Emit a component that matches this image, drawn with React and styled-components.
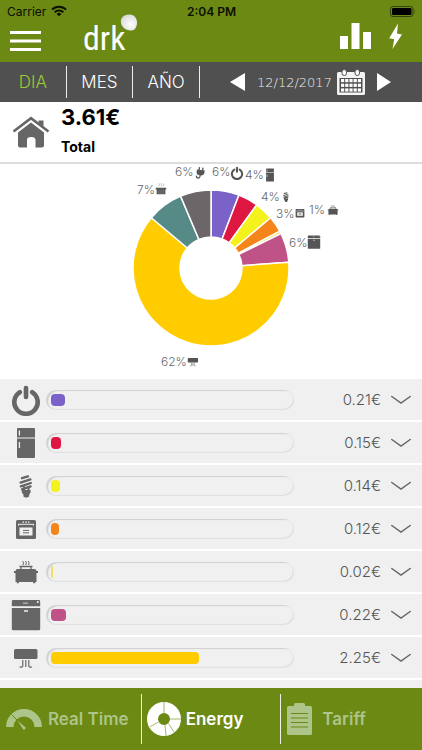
import React from "react";
import styled, { createGlobalStyle } from "styled-components";

const total = 3.61;

// label: where the percentage starts, icon: centre of the small icon
const appliances = [
  { id: "power", name: "Standby", value: 0.21, share: "6%", color: "#7b62c9", label: [212, 12], icon: [237, 9] },
  { id: "fridge", name: "Fridge", value: 0.15, share: "4%", color: "#de1642", label: [245, 15], icon: [270, 11] },
  { id: "bulb", name: "Lighting", value: 0.14, share: "4%", color: "#f5f11c", label: [261, 37], icon: [286, 33] },
  { id: "oven", name: "Oven", value: 0.12, share: "3%", color: "#f5841b", label: [276, 54], icon: [300, 49] },
  { id: "toaster", name: "Toaster", value: 0.02, share: "1%", color: "#f3dd62", label: [309, 50], icon: [333, 46] },
  { id: "dishwasher", name: "Dishwasher", value: 0.22, share: "6%", color: "#bf5286", label: [289, 83], icon: [314, 78] },
  { id: "aircon", name: "Air conditioning", value: 2.25, share: "62%", color: "#ffcc00", label: [161, 202], icon: [193, 198] },
  { id: "cooking", name: "Cooking", value: 0.27, share: "7%", color: "#568a86", label: [137, 30], icon: [161, 25] },
  { id: "plug", name: "Others", value: 0.23, share: "6%", color: "#6d6668", label: [175, 12], icon: [200, 9] },
];

const listed = appliances.slice(0, 7);

const shapes = {
  power: (
    <g fill="none" stroke="currentColor" strokeWidth="4.6" strokeLinecap="round">
      <path d="M9.8 8.2a11.7 11.7 0 1 0 12.4 0" />
      <path d="M16 4v9" />
    </g>
  ),
  fridge: (
    <g fill="currentColor">
      <path d="M8 1h16a1 1 0 0 1 1 1v8.500H7V2a1 1 0 0 1 1-1z" />
      <path d="M7 11.600h18V30a1 1 0 0 1-1 1H8a1 1 0 0 1-1-1z" />
      <path d="M9.400 3.500v5M9.400 15v6" stroke="#f0f0f0" strokeWidth="1.300" />
    </g>
  ),
  bulb: (
    <g fill="none" stroke="currentColor" strokeLinecap="round">
      <path d="M12 8.200l6-1.800M10.600 12.600l9.800-3.200M10.800 16.400l10-3.400M12 19.400l8.600-3" strokeWidth="2.300" />
      <path d="M14 17v4M18.600 17.500V21" strokeWidth="2" />
      <path d="M11.800 20h8.800v2.400l-1.400 2.200v1.800l-2 1.200h-2l-1.800-1.200v-1.800l-1.600-2.200z" fill="currentColor" stroke="none" />
    </g>
  ),
  oven: (
    <g>
      <rect x="6" y="7" width="20" height="19" rx="1.500" fill="currentColor" />
      <path d="M8.500 11.300h15M8.500 11v1.500M23.500 11v1.500" stroke="#f0f0f0" strokeWidth="1" />
      <path d="M12.500 9.200h1.500M15.200 9.200h1.600M18 9.200h1.500" stroke="#f0f0f0" strokeWidth="1.200" />
      <rect x="9.500" y="14.500" width="13" height="8" fill="#f0f0f0" />
      <path d="M13 17.400h6M13 19.800h6" stroke="currentColor" strokeWidth="1" />
    </g>
  ),
  toaster: (
    <g fill="currentColor">
      <path d="M7.500 13h17q2 0 2 3v10h-1.300v1.300h-2V26H8.800v1.300h-2V26H5.500V16q0-3 2-3z" />
      <path d="M4 15h2v2H4zM26 15h2v2h-2z" />
      <path d="M9.500 10.500h13M11 10.500v3M21 10.500v3" stroke="currentColor" strokeWidth="1.300" />
      <path d="M12.600 5q1.500 1.500.5 4M15.400 5q1.500 1.500.5 4M18.200 5q1.500 1.500.5 4" fill="none" stroke="currentColor" strokeWidth="1" />
    </g>
  ),
  dishwasher: (
    <g fill="currentColor">
      <path d="M3.200 1h25.600a1.400 1.400 0 0 1 1.400 1.400V7.200H1.800V2.400A1.400 1.400 0 0 1 3.200 1z" />
      <path d="M1.800 9h28.400v21a1.200 1.200 0 0 1-1.200 1.200H3A1.200 1.200 0 0 1 1.800 30z" />
      <path d="M13 4.200h5" stroke="#bbb" strokeWidth="1.200" />
      <circle cx="27.800" cy="3" r="1" fill="#f0f0f0" />
      <path d="M14 12h4" stroke="#f0f0f0" strokeWidth="1.500" />
    </g>
  ),
  aircon: (
    <g fill="none" stroke="currentColor" strokeWidth="1.200">
      <rect x="4" y="7" width="23.500" height="10" rx="1.500" fill="currentColor" stroke="none" />
      <path d="M12.800 18v5.500q0 2-3.300 1.500M15.800 18v7M18.800 18v5.500q0 2 3.300 1.500" />
    </g>
  ),
  cooking: (
    <g fill="currentColor">
      <path d="M4 13h24v4h-2v11H6V17H4z" />
      <path d="M10 17v11M14 17v11M18 17v11M22 17v11" stroke="#aaa" strokeWidth=".8" />
      <path d="M11 3q3 3 0 7M16 3q3 3 0 7M21 3q3 3 0 7" fill="none" stroke="#999" strokeWidth="1.300" />
    </g>
  ),
  plug: (
    <g fill="currentColor" transform="rotate(8 16 16)">
      <path d="M8 9h18v5q0 6-6 7h-6q-6-1-6-7z" />
      <path d="M13 3v7M21 3v7M17 20v4q0 4-4 4t-4-5" fill="none" stroke="currentColor" strokeWidth="3" />
    </g>
  ),
};

const ApplianceIcon = ({ id, size, ...rest }) => (
  <svg viewBox="0 0 32 32" width={size} height={size} aria-hidden="true" {...rest}>
    {shapes[id]}
  </svg>
);

const CX = 211;
const CY = 104;
const point = (angle, r) => {
  const a = angle * Math.PI * 2;
  return `${CX + Math.sin(a) * r} ${CY - Math.cos(a) * r}`;
};

const slicePath = (from, to) => {
  const large = to - from > 0.5 ? 1 : 0;
  return `M${point(from, 78)}A78 78 0 ${large} 1 ${point(to, 78)}L${point(to, 31)}A31 31 0 ${large} 0 ${point(from, 31)}Z`;
};

const EnergyChart = () => {
  let sum = 0;
  return (
    <Chart viewBox="0 0 422 215" role="img" aria-label="Consumption by appliance">
      {appliances.map((item) => {
        const from = sum / total;
        sum += item.value;
        return (
          <path key={item.id} d={slicePath(from, sum / total)} fill={item.color} stroke="#fff" strokeWidth="1.500" />
        );
      })}
      {appliances.map((item) => (
        <g key={item.id}>
          <ChartLabel x={item.label[0]} y={item.label[1]}>{item.share}</ChartLabel>
          <ApplianceIcon id={item.id} size={14} x={item.icon[0] - 7} y={item.icon[1] - 7} />
        </g>
      ))}
    </Chart>
  );
};

const App = () => {
  return (
    <Screen>
      <GlobalStyle />
      <Header>
        <StatusBar>
          <Carrier>
            Carrier
            <svg width="16" height="12" viewBox="0 0 16 12" aria-hidden="true">
              <g fill="none" stroke="#0b0f00" strokeWidth="2">
                <path d="M1 4.600a10 10 0 0 1 14 0" />
                <path d="M3.700 7.300a6.200 6.200 0 0 1 8.600 0" />
              </g>
              <path d="M8 11.200L5.600 8.900a3.400 3.400 0 0 1 4.800 0z" fill="#0b0f00" />
            </svg>
          </Carrier>
          <Clock>2:04 PM</Clock>
          <Battery>
            <svg width="26" height="11" viewBox="0 0 26 11" aria-hidden="true">
              <rect x=".5" y=".5" width="22.500" height="10" rx="2.500" fill="none" stroke="#34430a" />
              <rect x="2" y="2" width="19.500" height="7" rx="1.200" fill="#000" />
              <path d="M24 3.700q1.500 1.800 0 3.600z" fill="#34430a" />
            </svg>
          </Battery>
        </StatusBar>
        <NavBar>
          <IconButton aria-label="Menu">
            <svg width="32" height="32" viewBox="0 0 32 32">
              <path d="M0 12.500h31M0 21h31M0 29.500h31" stroke="#fff" strokeWidth="3.200" />
            </svg>
          </IconButton>
          <Logo>
            drk
            <LogoBall width="18" height="18" viewBox="0 0 18 18" aria-hidden="true">
              <defs>
                <radialGradient id="ball" cx=".6" cy=".6" r=".6">
                  <stop offset="0" stopColor="#fff" />
                  <stop offset="1" stopColor="#dcdcdc" />
                </radialGradient>
              </defs>
              <path d="M7 .8Q13-.2 15.500 3.500T16.500 12Q15 17 10 16.500T2.500 12.500Q.3 10 1 6T7 .8z" fill="url(#ball)" />
            </LogoBall>
          </Logo>
          <NavActions>
            <IconButton aria-label="Statistics">
              <svg width="31" height="32" viewBox="0 0 31 32">
                <path d="M0 16h8v13H0zM11.500 3h8v26h-8zM23 12h8v17h-8z" fill="#fff" />
              </svg>
            </IconButton>
            <IconButton aria-label="Power">
              <svg width="14" height="32" viewBox="0 0 14 32">
                <path d="M9 3.500L.2 18.200l5 1L3.500 29 13 14.500l-5-1z" fill="#fff" />
              </svg>
            </IconButton>
          </NavActions>
        </NavBar>
      </Header>

      <PeriodBar>
        <Period $active>DIA</Period>
        <Period>MES</Period>
        <Period>AÑO</Period>
        <DatePicker>
          <IconButton aria-label="Previous day">
            <svg width="15" height="18" viewBox="0 0 15 18"><path d="M0 9L15 0v18z" fill="#fff" /></svg>
          </IconButton>
          <DateButton>
            12/12/2017
            <svg width="28" height="26" viewBox="0 0 28 26" aria-hidden="true">
              <path d="M1.500 3h25A1.500 1.500 0 0 1 28 4.500v20a1.500 1.500 0 0 1-1.500 1.500h-25A1.500 1.500 0 0 1 0 24.500v-20A1.500 1.500 0 0 1 1.500 3z" fill="#f4f4f4" />
              <path d="M2.500 9h23v14.500h-23z" fill="#505050" />
              <g fill="#fff">
                {[10, 14.7, 19.4].map((y) =>
                  [4, 8.2, 12.4, 16.6, 20.8].map((x) => <rect key={`${x}-${y}`} x={x} y={y} width="3.200" height="3.200" />)
                )}
              </g>
              <g fill="#fff" stroke="#505050">
                <rect x="5" y=".5" width="4.500" height="6" rx="2.200" />
                <rect x="18" y=".5" width="4.500" height="6" rx="2.200" />
              </g>
            </svg>
          </DateButton>
          <IconButton aria-label="Next day">
            <svg width="14" height="18" viewBox="0 0 14 18"><path d="M14 9L0 0v18z" fill="#fff" /></svg>
          </IconButton>
        </DatePicker>
      </PeriodBar>

      <Summary>
        <svg width="38" height="32" viewBox="0 0 38 32" aria-hidden="true">
          <path d="M1.500 15.500L19 2.200l17.500 13.300" fill="none" stroke="#666" strokeWidth="2.600" />
          <path d="M26.500 4.500h5v7.500l-5-4z" fill="#666" />
          <path d="M19 6.500l13 10V29.500a2 2 0 0 1-2 2h-6.500V24q0-3-4.300-3T15 24v7.500H8a2 2 0 0 1-2-2V16.500z" fill="#666" />
        </svg>
        <div>
          <Amount>{total}€</Amount>
          <Caption>Total</Caption>
        </div>
      </Summary>

      <Content>
        <EnergyChart />
        <List>
          {listed.map((item) => (
            <Row key={item.id}>
              <RowIcon>
                <ApplianceIcon id={item.id} size={32} />
              </RowIcon>
              <Track>
                <Fill $color={item.color} style={{ width: `${(item.value / total) * 100}%` }} />
              </Track>
              <Cost>{item.value.toFixed(2)}€</Cost>
              <IconButton aria-label={`Show ${item.name}`}>
                <svg width="20" height="10" viewBox="0 0 20 10">
                  <path d="M.8 1.500L10 8l9.200-6.500" fill="none" stroke="#666" strokeWidth="1.500" strokeLinecap="round" />
                </svg>
              </IconButton>
            </Row>
          ))}
        </List>
        <ListEnd />
      </Content>

      <Footer>
        <FooterTab>
          <svg width="37" height="34" viewBox="0 0 37 34" aria-hidden="true">
            <path d="M0 25a18 18 0 0 1 36 0H28.500a10.500 10.500 0 0 0-21 0z" fill="currentColor" />
            <path d="M5.500 12.500l5.500 5.500" stroke="#6b8913" strokeWidth="1" />
            <path d="M11.500 18.500l5.400 8.500a1.500 1.500 0 0 0 2.400-1.800z" fill="currentColor" />
          </svg>
          Real Time
        </FooterTab>
        <FooterTab $active>
          <svg width="34" height="34" viewBox="0 0 34 34" aria-hidden="true">
            <circle cx="17" cy="17" r="11.500" fill="none" stroke="#fff" strokeWidth="11" />
            <path d="M17 0v11M23 17h11M21.500 21.500l5.500 8.500M18 23l1 11M11.500 20L2.500 25" stroke="#8ba442" strokeWidth=".8" />
          </svg>
          Energy
        </FooterTab>
        <FooterTab>
          <svg width="25" height="34" viewBox="0 0 25 34" aria-hidden="true">
            <path d="M1.500 4H7V2.500Q7 1 8.500 1h8Q18 1 18 2.500V4h5.500A1.500 1.500 0 0 1 25 5.500v26a1.500 1.500 0 0 1-1.500 1.500h-22A1.500 1.500 0 0 1 0 31.500v-26A1.500 1.500 0 0 1 1.500 4z" fill="currentColor" />
            <path d="M4 11.500h17M4 16h17M4 20.500h17M4 25h17" stroke="#6b8913" strokeWidth="1.200" />
          </svg>
          <TariffLabel>Tariff</TariffLabel>
        </FooterTab>
      </Footer>
    </Screen>
  );
};

export default App;

const GlobalStyle = createGlobalStyle`
  * {
    box-sizing: border-box;
  }
  body {
    margin: 0;
    background-color: white;
    font-family: Inter, "Liberation Sans", sans-serif;
  }
  svg {
    display: block;
    flex-shrink: 0;
  }
  button {
    font: inherit;
    color: inherit;
    background: none;
    border: none;
    padding: 0;
    cursor: pointer;
  }
`;

const Screen = styled.div`
  display: flex;
  flex-direction: column;
  height: 100vh;
`;

const Header = styled.header`
  background-color: #6b8913;
`;

const StatusBar = styled.div`
  display: grid;
  grid-template-columns: 1fr auto 1fr;
  align-items: center;
  height: 20px;
  padding: 2px 6px 0 7px;
  font-size: 12px;
  color: #0b0f00;
`;

const Carrier = styled.div`
  display: flex;
  align-items: center;
  gap: 5px;
`;

const Clock = styled.div`
  font-weight: 600;
`;

const Battery = styled.div`
  display: flex;
  justify-content: flex-end;
`;

const IconButton = styled.button`
  display: flex;
`;

const NavBar = styled.div`
  display: flex;
  align-items: flex-start;
  height: 42px;
  padding: 0 19px 0 10px;
`;

const Logo = styled.div`
  position: relative;
  margin-left: 41px;
  font-family: "Liberation Sans Narrow", "Roboto Condensed", "DejaVu Sans Condensed", sans-serif;
  font-size: 34px;
  line-height: 36px;
  color: white;
`;

const LogoBall = styled.svg`
  position: absolute;
  top: -6px;
  right: -12px;
`;

const NavActions = styled.div`
  display: flex;
  gap: 18px;
  margin-left: auto;
`;

const PeriodBar = styled.nav`
  display: grid;
  grid-template-columns: 3fr 3fr 3fr 10fr;
  align-items: center;
  height: 40px;
  background-color: #505050;
`;

const Period = styled.button`
  height: 32px;
  border-right: 1px solid #eee;
  font-size: 17px;
  font-weight: 300;
  color: ${(props) => (props.$active ? "#9acd32" : "white")};
`;

const DatePicker = styled.div`
  display: flex;
  align-items: center;
  justify-content: space-between;
  padding: 0 31px 0 30px;
`;

const DateButton = styled.button`
  && {
    display: flex;
    align-items: center;
    gap: 5px;
    font-family: "DejaVu Sans", sans-serif;
    font-size: 13px;
    font-weight: 200;
    color: #eee;
  }
`;

const Summary = styled.section`
  display: flex;
  align-items: center;
  gap: 11px;
  padding: 0 12px;
  border-bottom: 2px solid #ddd;
`;

const Amount = styled.div`
  font-size: 22px;
  font-weight: 700;
  line-height: 30px;
`;

const Caption = styled.div`
  font-size: 14px;
  font-weight: 700;
  line-height: 30px;
`;

const Content = styled.main`
  display: flex;
  flex-direction: column;
  flex: 1;
  min-height: 0;
  overflow-y: auto;
  scrollbar-width: none;
`;

const Chart = styled.svg`
  width: 100%;
  color: #555;
`;

const ChartLabel = styled.text`
  font-size: 12px;
  font-weight: 300;
  fill: #666;
`;

const List = styled.ul`
  display: flex;
  flex-direction: column;
  gap: 2px;
  margin: 0;
  padding: 0;
  list-style: none;
`;

const Row = styled.li`
  display: grid;
  grid-template-columns: 36px 1fr 87px 30px;
  align-items: center;
  height: 41px;
  padding: 0 11px 0 10px;
  background-color: #f0f0f0;

  button {
    justify-content: flex-end;
  }
`;

const RowIcon = styled.div`
  color: #666;
`;

const ListEnd = styled.div`
  flex: 1;
  margin-top: 2px;
  background-color: #f0f0f0;
`;

const Track = styled.div`
  display: flex;
  align-items: center;
  height: 20px;
  padding: 0 5px;
  border-radius: 10px;
  box-shadow: inset 2px 1px 1px 0 #d0d0d0, inset -1px -1px 1px #dedede;
`;

const Fill = styled.div`
  min-width: 2px;
  height: 12px;
  border-radius: 4px;
  background-color: ${(props) => props.$color};
`;

const Cost = styled.div`
  font-size: 15px;
  font-weight: 300;
  text-align: right;
  color: #555;
`;

const Footer = styled.footer`
  display: grid;
  grid-template-columns: repeat(3, 1fr);
  align-items: center;
  height: 62px;
  background-color: #6b8913;
`;

const FooterTab = styled.button`
  && {
    display: flex;
    align-items: center;
    gap: 5px;
    height: 50px;
    padding-left: 5px;
    border-left: 1px solid ${(props) => (props.$active ? "#eee" : "transparent")};
    border-right: 1px solid ${(props) => (props.$active ? "#eee" : "transparent")};
    font-size: 17px;
    font-weight: 600;
    color: ${(props) => (props.$active ? "white" : "#adc588")};
  }
`;

const TariffLabel = styled.span`
  padding-left: 5px;
`;
